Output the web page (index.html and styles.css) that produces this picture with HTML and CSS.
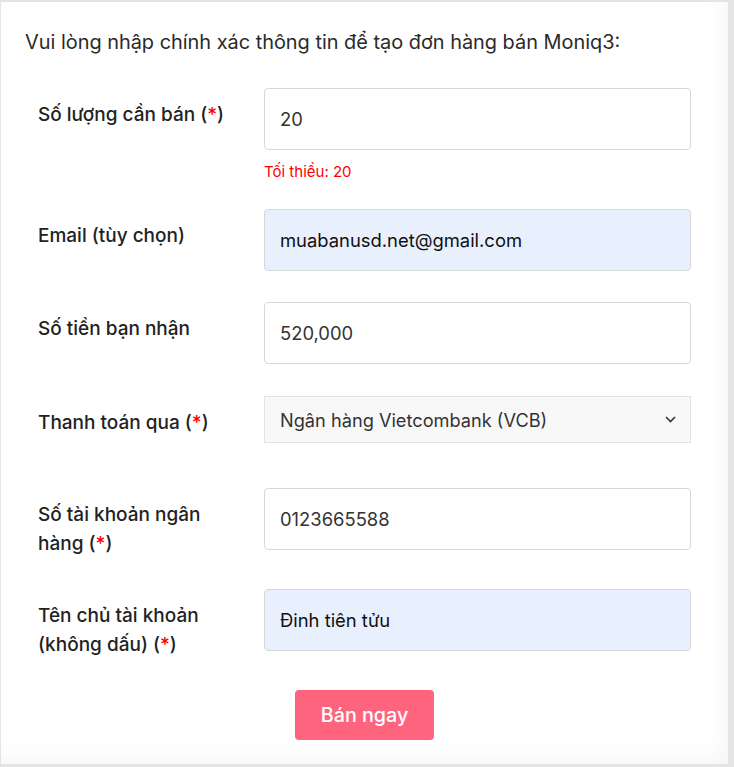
FILE: index.html
```html
<!DOCTYPE html>
<html lang="vi">
<head>
<meta charset="utf-8">
<title>Bán Moniq3</title>
<link rel="stylesheet" href="styles.css">
</head>
<body>
<main class="card">
  <p class="intro">Vui lòng nhập chính xác thông tin để tạo đơn hàng bán Moniq3:</p>
  <form class="form">
    <div class="field field-qty">
      <label class="label">Số lượng cần bán (<span class="req">*</span>)</label>
      <div class="control">
        <input class="input" type="text" value="20">
        <div class="hint">Tối thiểu: 20</div>
      </div>
    </div>
    <div class="field field-email">
      <label class="label">Email (tùy chọn)</label>
      <div class="control"><input class="input input-filled" type="text" value="muabanusd.net@gmail.com"></div>
    </div>
    <div class="field field-amount">
      <label class="label">Số tiền bạn nhận</label>
      <div class="control"><input class="input" type="text" value="520,000"></div>
    </div>
    <div class="field field-pay">
      <label class="label">Thanh toán qua (<span class="req">*</span>)</label>
      <div class="control">
        <div class="select">
          <span class="select-text">Ngân hàng Vietcombank (VCB)</span>
          <svg class="chevron" width="11" height="7" viewBox="0 0 11 7"><path d="M1 1l4.5 4.5L10 1" fill="none" stroke="#333" stroke-width="1.6"/></svg>
        </div>
      </div>
    </div>
    <div class="field field-account">
      <label class="label"><span class="line">Số tài khoản ngân</span><span class="line">hàng (<span class="req">*</span>)</span></label>
      <div class="control"><input class="input" type="text" value="0123665588"></div>
    </div>
    <div class="field field-name">
      <label class="label"><span class="line">Tên chủ tài khoản</span><span class="line">(không dấu) (<span class="req">*</span>)</span></label>
      <div class="control"><input class="input input-filled" type="text" value="Đinh tiên tửu"></div>
    </div>
    <div class="actions">
      <button class="btn" type="button">Bán ngay</button>
    </div>
  </form>
</main>
</body>
</html>
```
FILE: styles.css
```css
html, body {
  margin: 0;
  padding: 0;
}
body {
  background: #e4e4e4;
  font-family: Inter, "Open Sans", sans-serif;
  color: #222;
}
.card {
  box-sizing: border-box;
  width: 727px;
  height: 762px;
  margin: 2px 0 0 1px;
  padding: 27px 0 0 24px;
  background: #fff;
  box-shadow: inset -22px -22px 28px -22px rgba(0, 0, 0, 0.05);
}
.intro {
  margin: 0 0 32px;
  font-size: 19.9px;
  line-height: 27px;
  color: #2a2a2a;
}
.form {
  margin: 0;
}
.field {
  display: grid;
  grid-template-columns: 239px 427px;
  align-items: start;
}
.label {
  box-sizing: border-box;
  padding: 12px 10px 0 13px;
  font-size: 19px;
  line-height: 29px;
  font-weight: 500;
  color: #222;
}
.line {
  display: block;
}
.req {
  color: #ff0000;
}
.input {
  box-sizing: border-box;
  display: block;
  width: 427px;
  height: 62px;
  margin: 0;
  padding: 0 15px;
  border: 1px solid #d8d8d8;
  border-radius: 4px;
  background: #fff;
  font-family: inherit;
  font-size: 18.4px;
  color: #333;
  outline: none;
}
.input-filled {
  background: #e8f0fe;
  color: #111;
}
.hint {
  margin-top: 12px;
  font-size: 15px;
  line-height: 20px;
  color: #ff0000;
}
.field-qty { margin-bottom: 27px; }
.field-email { margin-bottom: 31px; }
.field-amount { margin-bottom: 32px; }
.field-pay { margin-bottom: 45px; }
.field-account { margin-bottom: 31px; }
.select {
  box-sizing: border-box;
  display: flex;
  align-items: center;
  justify-content: space-between;
  height: 47px;
  padding: 0 14px 0 15px;
  border: 1px solid #e3e3e3;
  background: #f8f8f8;
  font-size: 18.2px;
  color: #333;
}
.chevron {
  display: block;
}
.actions {
  display: flex;
  justify-content: center;
  margin: 31px 24px 0 0;
}
.btn {
  width: 139px;
  height: 50px;
  border: 0;
  border-radius: 4px;
  background: #ff647e;
  color: #fff;
  font-family: inherit;
  font-size: 19.7px;
  font-weight: 500;
}
```
